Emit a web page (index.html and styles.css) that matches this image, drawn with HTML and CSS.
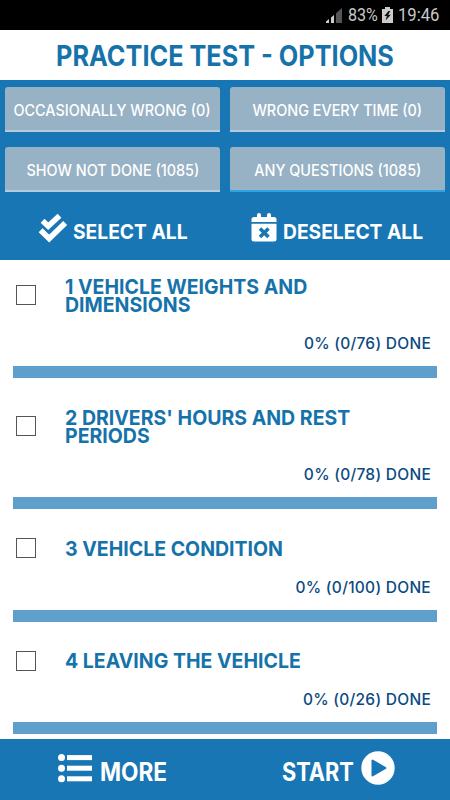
FILE: index.html
```
<!DOCTYPE html>
<html lang="en">
<head>
  <meta charset="UTF-8"/>
  <meta name="viewport" content="width=device-width, initial-scale=1.0"/>
  <title>Practice Test - Options</title>
  <link rel="stylesheet" href="styles.css">
</head>
<body>
  <!-- Status bar -->
  <div class="status">
    <svg class="signal" width="16" height="15" viewBox="0 0 16 15">
      <path d="M10 5.2L16 0v15h-6z" fill="#555"/>
      <path d="M0 13.5L3 11v4H0zM5 9.5L8 7v8H5z" fill="#ccc"/>
    </svg>
    <span class="pct">83%</span>
    <svg class="battery" width="11" height="16" viewBox="0 0 11 16">
      <path d="M3 0h5v2h3v14H0V2h3z" fill="#ccc"/>
      <path d="M6.5 4L2.3 9h2.5L3.6 13.5 8.8 7.7H6.2L8.3 4z" fill="#111"/>
    </svg>
    <span class="clock">19:46</span>
  </div>

  <header>
    <h1>PRACTICE TEST - OPTIONS</h1>
  </header>

  <!-- Filters -->
  <section class="panel">
    <div class="filters">
      <button class="filter"><span>OCCASIONALLY WRONG (0)</span></button>
      <button class="filter"><span>WRONG EVERY TIME (0)</span></button>
      <button class="filter"><span>SHOW NOT DONE (1085)</span></button>
      <button class="filter active"><span>ANY QUESTIONS (1085)</span></button>
    </div>
    <div class="select-row">
      <a class="select all">
        <svg width="30" height="30" viewBox="0 0 30 30" fill="none" stroke="#fff" stroke-width="5.6">
          <path d="M4.600 7.800l5.600 5.400L21.500 2.800"/>
          <path d="M2.600 17.300l8.600 8.300L27.200 10"/>
        </svg>
        <span>SELECT ALL</span>
      </a>
      <a class="select none">
        <svg width="26" height="30" viewBox="0 0 26 30">
          <path d="M3 4h3V2a2 2 0 0 1 4 0v2h6V2a2 2 0 0 1 4 0v2h3a2.500 2.500 0 0 1 2.500 2.500V9H.5V6.500A2.500 2.500 0 0 1 3 4z" fill="#fff"/>
          <path d="M.5 10.800h25V26a2.500 2.500 0 0 1-2.500 2.500H3A2.500 2.500 0 0 1 .5 26z" fill="#fff"/>
          <path d="M9 15.500l8.500 8.500M17.500 15.500L9 24" stroke="#1976b4" stroke-width="3.600"/>
        </svg>
        <span>DESELECT ALL</span>
      </a>
    </div>
  </section>

  <!-- Topics -->
  <main class="list">
    <article class="topic">
      <div class="head"><i class="box"></i><h2>1 VEHICLE WEIGHTS AND DIMENSIONS</h2></div>
      <p class="done">0% (0/76) DONE</p>
      <div class="bar"></div>
    </article>
    <article class="topic">
      <div class="head"><i class="box"></i><h2>2 DRIVERS' HOURS AND REST PERIODS</h2></div>
      <p class="done">0% (0/78) DONE</p>
      <div class="bar"></div>
    </article>
    <article class="topic">
      <div class="head"><i class="box"></i><h2>3 VEHICLE CONDITION</h2></div>
      <p class="done">0% (0/100) DONE</p>
      <div class="bar"></div>
    </article>
    <article class="topic">
      <div class="head"><i class="box"></i><h2>4 LEAVING THE VEHICLE</h2></div>
      <p class="done">0% (0/26) DONE</p>
      <div class="bar"></div>
    </article>
  </main>

  <footer>
    <a class="more">
      <svg width="34" height="29" viewBox="0 0 34 29" fill="#fff">
        <circle cx="3.500" cy="3.600" r="3.500"/><rect x="9" y="1.100" width="25" height="5"/>
        <circle cx="3.500" cy="14.200" r="3.500"/><rect x="9" y="11.700" width="25" height="5"/>
        <circle cx="3.500" cy="24.800" r="3.500"/><rect x="9" y="22.300" width="25" height="5"/>
      </svg>
      <span>MORE</span>
    </a>
    <a class="start">
      <span>START</span>
      <svg width="34" height="34" viewBox="0 0 34 34">
        <circle cx="17" cy="17" r="16.700" fill="#fff"/>
        <path d="M11.500 9.500v15L24.500 17z" fill="#1976b4" stroke="#1976b4" stroke-width="2" stroke-linejoin="round"/>
      </svg>
    </a>
  </footer>
</body>
</html>
```
FILE: styles.css
```
:root {
  --blue: #1976b4;
  --ink: #1673aa;
  --navy: #0b4a80;
}
* { box-sizing: border-box; margin: 0; padding: 0; }
body {
  width: 450px; height: 800px;
  display: flex; flex-direction: column;
  overflow: hidden;
  background: #fff;
  color: var(--ink);
  font-family: Inter, "Liberation Sans", sans-serif;
}
span, h1, h2, p { white-space: nowrap; }
svg { flex: none; display: block; }

/* Status bar */
.status {
  height: 30px;
  background: #000; color: #c8c8c8;
  display: flex; align-items: center;
  padding-left: 326px;
  font: 18.500px/32px Roboto, sans-serif;
}
.pct, .clock { transform: scaleX(.87); transform-origin: left; }
.pct { width: 29px; margin-left: 6px; }
.battery { margin-left: 5px; }
.clock { margin-left: 5px; transform: scaleX(.9); }

/* Header */
header { height: 49.500px; text-align: center; }
h1 { font-size: 28px; line-height: 52px; font-weight: 700; transform: scaleX(.902); }

/* Filters */
.panel { height: 180px; background: var(--blue); padding: 7.500px 5px 0; }
.filters { display: grid; grid-template-columns: 215px 215px; gap: 15px 10px; }
.filter {
  height: 45px;
  background: #97b1c5; color: #fff;
  border: 0; border-bottom: 2px solid #b5cbdb;
  border-radius: 3px 3px 0 0;
  font: 500 15.500px/47px Inter, sans-serif;
  display: flex; justify-content: center;
}
.filter span { transform: scaleX(.93); }
.filter.active { border-bottom-color: #2fa4e2; }
.select-row { display: flex; color: #fff; padding: 21px 0 0 33px; }
.select { display: flex; }
.select span {
  font-size: 20.500px; font-weight: 700; line-height: 38px;
  transform: scaleX(.938); transform-origin: left;
}
.select.all { width: 213px; gap: 5px; }
.select.none { gap: 6px; }

/* Topics */
.list { flex: 1; overflow: hidden; }
.topic { padding: 18px 13px 12.850px 12.500px; }
.head { display: flex; align-items: center; }
.box { width: 20px; height: 20px; border: 1px solid #555; margin: -2px 29px 0 3.500px; flex: none; }
h2 {
  width: 335px;
  font-size: 20.500px; font-weight: 700; line-height: 18.670px;
  white-space: normal;
  transform: scaleX(.952); transform-origin: left;
}
.done {
  color: var(--navy);
  font-size: 15.500px; line-height: 20px; font-weight: 500;
  letter-spacing: .27px;
  text-align: right;
  margin: 19px 6px 12px 0;
}
.bar { height: 12px; background: #5e9fcb; }

/* Footer */
footer {
  height: 61px;
  background: var(--blue); color: #fff;
  display: flex; padding-left: 58px;
  font-size: 25px; font-weight: 700;
}
footer a { display: flex; }
footer span { line-height: 66px; transform: scaleX(.905); transform-origin: left; }
.more { width: 224px; gap: 8px; }
.more svg { margin-top: 15px; }
.start span { width: 79px; transform: scaleX(.87); }
.start svg { margin-top: 12px; }
```
